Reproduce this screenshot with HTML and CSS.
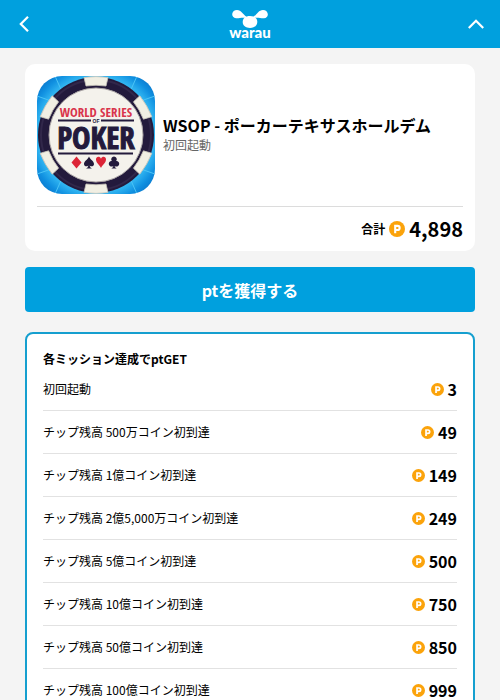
FILE: index.html
```html
<!DOCTYPE html>
<html lang="ja">
<head>
<meta charset="utf-8">
<meta name="viewport" content="width=device-width, initial-scale=1">
<title>WSOP - ポーカーテキサスホールデム</title>
<link rel="stylesheet" href="styles.css">
</head>
<body>
<svg width="0" height="0" class="defs" aria-hidden="true">
  <symbol id="pt" viewBox="0 0 16 16">
    <circle cx="8" cy="8" r="8" fill="#fba30b"/>
    <path d="M6.200 12.200V4.900h2.400a2.050 2.050 0 0 1 0 4.100H6.200" fill="none" stroke="#fff" stroke-width="2.100"/>
  </symbol>
</svg>
<header class="bar">
  <button class="bar-btn" type="button" aria-label="戻る">
    <svg width="16" height="16" viewBox="0 0 16 16"><path d="M12 .8 4.800 8l7.200 7.200" class="chev"/></svg>
  </button>
  <a class="logo" href="#" aria-label="warau">
    <svg width="44" height="32" viewBox="0 0 44 32" fill="#fff">
      <path d="M18 10C13.500 9.300 11 10.600 8 10.300 5.500 10 4 8.200 4.200 6 4.400 3.500 6.400 1.900 9 1.900c4.500.1 5.500 4.100 9.500 6.800z"/>
      <path d="M26 10c4.500-.7 7 .6 10 .3 2.500-.3 4-2.100 3.800-4.300-.2-2.500-2.200-4.100-4.800-4.100-4.500.1-5.500 4.100-9.500 6.800z"/>
      <path d="M22 8c4.700 0 7.300 2.300 7.300 6 0 3.500-3 5.900-7.300 5.900s-7.300-2.400-7.300-5.900c0-3.700 2.600-6 7.300-6z"/>
      <text x="22" y="30" text-anchor="middle" class="wordmark">warau</text>
    </svg>
  </a>
  <button class="bar-btn" type="button" aria-label="メニュー">
    <svg width="16" height="16" viewBox="0 0 16 16"><path d="m.8 12 7.200-7.200 7.200 7.200" class="chev"/></svg>
  </button>
</header>
<main class="page">
  <section class="card">
    <div class="app">
      <svg class="app-icon" viewBox="0 0 118 118" role="img" aria-label="World Series of Poker">
        <defs>
          <radialGradient id="blue" r=".72"><stop offset=".65" stop-color="#3cc2f7"/><stop offset=".8" stop-color="#0f8fe0"/><stop offset="1" stop-color="#0759b2"/></radialGradient>
          <clipPath id="round"><rect width="118" height="118" rx="25"/></clipPath>
        </defs>
        <g clip-path="url(#round)">
          <rect width="118" height="118" fill="url(#blue)"/>
          <path d="M0 20 20 27M18 0l8 18M118 20 98 27M100 0l-8 18M0 98l20-7M18 118l8-18M118 98l-20-7M100 118l-8-18" stroke="#4dc4f5" stroke-width="1"/>
          <circle cx="59" cy="59" r="58" fill="#231a3c"/>
          <circle cx="59" cy="59" r="55" fill="none" stroke="#31274a" stroke-width="2"/>
          <g fill="#f1efe3" stroke="#c9c6bb" stroke-width=".8">
            <path id="chip" d="M47 1.500q12-1.800 24 0l-2 8.500q-10-1.500-20 0z"/>
            <use href="#chip" transform="rotate(60 59 59)"/>
            <use href="#chip" transform="rotate(120 59 59)"/>
            <use href="#chip" transform="rotate(180 59 59)"/>
            <use href="#chip" transform="rotate(240 59 59)"/>
            <use href="#chip" transform="rotate(300 59 59)"/>
          </g>
          <circle cx="59" cy="59" r="47" fill="#f4f2ec" stroke="#aaa5a5"/>
          <text x="59" y="41" text-anchor="middle" class="series">WORLD SERIES</text>
          <path d="M21 44.500h33M64 44.500h33M21 77.500h75" stroke="#231a3c" stroke-width="1.800"/>
          <text x="59" y="47" text-anchor="middle" class="of">OF</text>
          <text x="59" y="73" text-anchor="middle" class="poker">POKER</text>
          <path d="m39.500 80.500 5 6-5 6-5-6z" fill="#dc2537"/>
          <path d="M52 80.500c1 3 5 4.500 5 7.500 0 2.500-3 3-4.300 1.400.2 1.500 1 2.600 2.300 3.100h-6c1.300-.5 2.100-1.600 2.300-3.100C50 91 47 90.500 47 88c0-3 4-4.500 5-7.500z" fill="#231a3c"/>
          <path d="M64 92c-1-3-5-5-5-8.500 0-3.500 4-3.500 5-.8 1-2.700 5-2.700 5 .8 0 3.500-4 5.500-5 8.500z" fill="#dc2537"/>
          <path d="M77 80.500a2.800 2.800 0 0 1 2.200 4.500 2.800 2.800 0 1 1-1.500 5c.2 1.300.8 2.100 2 2.500h-5.400c1.200-.4 1.800-1.200 2-2.500a2.800 2.800 0 1 1-1.500-5 2.800 2.800 0 0 1 2.200-4.500z" fill="#231a3c"/>
        </g>
      </svg>
      <div class="app-text">
        <h1 class="app-name">WSOP - ポーカーテキサスホールデム</h1>
        <p class="app-note">初回起動</p>
      </div>
    </div>
    <div class="total">
      <span class="total-label">合計</span>
      <svg class="pt pt-large"><use href="#pt"/></svg>
      <strong class="total-value">4,898</strong>
    </div>
  </section>
  <button class="cta" type="button">ptを獲得する</button>
  <section class="missions">
    <h2 class="missions-title">各ミッション達成でptGET</h2>
    <ul class="list">
      <li class="row"><span>初回起動</span><span class="value"><svg class="pt"><use href="#pt"/></svg>3</span></li>
      <li class="row"><span>チップ残高 500万コイン初到達</span><span class="value"><svg class="pt"><use href="#pt"/></svg>49</span></li>
      <li class="row"><span>チップ残高 1億コイン初到達</span><span class="value"><svg class="pt"><use href="#pt"/></svg>149</span></li>
      <li class="row"><span>チップ残高 2億5,000万コイン初到達</span><span class="value"><svg class="pt"><use href="#pt"/></svg>249</span></li>
      <li class="row"><span>チップ残高 5億コイン初到達</span><span class="value"><svg class="pt"><use href="#pt"/></svg>500</span></li>
      <li class="row"><span>チップ残高 10億コイン初到達</span><span class="value"><svg class="pt"><use href="#pt"/></svg>750</span></li>
      <li class="row"><span>チップ残高 50億コイン初到達</span><span class="value"><svg class="pt"><use href="#pt"/></svg>850</span></li>
      <li class="row"><span>チップ残高 100億コイン初到達</span><span class="value"><svg class="pt"><use href="#pt"/></svg>999</span></li>
    </ul>
  </section>
</main>
</body>
</html>
```
FILE: styles.css
```css
* {
  box-sizing: border-box;
  margin: 0;
  padding: 0;
}

html {
  scrollbar-width: none;
}

body {
  background: #f4f4f4;
  color: #000;
  font-family: "Noto Sans CJK JP", sans-serif;
  font-size: 12px;
  line-height: 20px;
}

.defs {
  position: absolute;
}

.bar {
  display: flex;
  align-items: center;
  justify-content: space-between;
  height: 48px;
  padding: 0 8px;
  background: #00a0de;
}

.bar-btn {
  display: grid;
  place-items: center;
  width: 32px;
  height: 32px;
  border: 0;
  background: none;
}

.chev {
  fill: none;
  stroke: #fff;
  stroke-width: 2.2;
}

.logo svg {
  display: block;
}

.wordmark {
  font: 900 15px Lato, sans-serif;
}

.page {
  padding: 16px 5%;
}

.card {
  padding: 12px 12px 10px;
  border-radius: 10px;
  background: #fff;
}

.app {
  display: flex;
  align-items: center;
  gap: 8px;
  padding-bottom: 12px;
  border-bottom: 1px solid #dcdcdc;
}

.app-icon {
  flex: none;
  width: 118px;
  height: 118px;
}

.series {
  fill: #d9344b;
  font: 700 13px "Open Sans Condensed", "DejaVu Sans Condensed", sans-serif;
}

.of {
  fill: #231a3c;
  font: 700 5px "Liberation Sans", sans-serif;
}

.poker {
  fill: #231a3c;
  stroke: #231a3c;
  stroke-width: 1;
  font: 700 31px "Open Sans Condensed", "Liberation Sans Narrow", sans-serif;
}

.app-name {
  font-size: 16px;
  font-weight: 700;
  line-height: 20px;
}

.app-note {
  color: #666;
}

.total {
  display: flex;
  align-items: center;
  justify-content: flex-end;
  gap: 4px;
  padding-top: 10px;
}

.total-label {
  font-weight: 700;
}

.total-value {
  font-size: 20px;
  line-height: 24px;
}

.pt {
  width: 13px;
  height: 13px;
}

.pt-large {
  width: 16px;
  height: 16px;
}

.cta {
  display: block;
  width: 100%;
  height: 45px;
  margin: 16px 0 20px;
  border: 0;
  border-radius: 4px;
  background: #00a0de;
  color: #fff;
  font: 700 16px "Noto Sans CJK JP", sans-serif;
}

.missions {
  padding: 16px;
  border: 2px solid #159fcf;
  border-radius: 8px;
  background: #fff;
}

.missions-title {
  font-size: 12px;
  font-weight: 700;
  line-height: 18px;
}

.list {
  list-style: none;
}

.row {
  display: flex;
  align-items: center;
  justify-content: space-between;
  height: 43px;
  border-bottom: 1px solid #e2e2e2;
}

.value {
  display: flex;
  align-items: center;
  gap: 4px;
  font-size: 16px;
  font-weight: 700;
}
```
